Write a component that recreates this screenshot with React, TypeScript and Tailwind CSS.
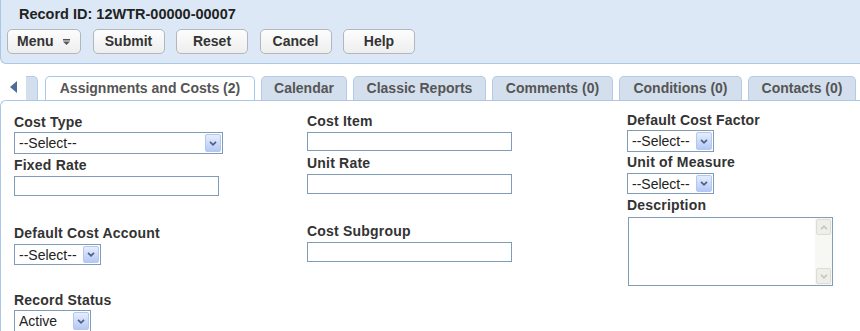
import React from "react";

function Chevron() {
  return (
    <svg width="8" height="5" viewBox="0 0 8 5">
      <path d="M1 0.8l3 3 3-3" stroke="#4d6185" strokeWidth="1.7" fill="none" />
    </svg>
  );
}

function FakeSelect({ value, className }: { value: string; className: string }) {
  return (
    <div className={`flex border border-[#7f9db9] bg-white pl-[4px] pr-[1px] ${className}`}>
      <span className="flex flex-1 items-center text-[14px] leading-4 text-[#222]">{value}</span>
      <span className="my-[1px] flex w-[16px] items-center justify-center rounded-[2px] border border-[#b4c7ef] bg-gradient-to-b from-[#e6edfd] to-[#b5c9f5]">
        <Chevron />
      </span>
    </div>
  );
}

function Label({ text, className = "" }: { text: string; className?: string }) {
  return (
    <div className={`h-4 text-[14px] leading-4 font-bold tracking-[0.2px] text-[#333] whitespace-nowrap ${className}`}>
      {text}
    </div>
  );
}

function Btn({ children, className = "" }: { children: React.ReactNode; className?: string }) {
  return (
    <div
      className={`flex h-[25px] items-center justify-center rounded-[5px] border border-[#b0b7bf] bg-gradient-to-b from-[#fdfdfd] to-[#eeeeee] text-[14px] font-bold text-[#333] ${className}`}
    >
      {children}
    </div>
  );
}

export default function App() {
  const tabs = [
    { label: "Calendar", w: "w-[86px]" },
    { label: "Classic Reports", w: "w-[133px]" },
    { label: "Comments (0)", w: "w-[121px]" },
    { label: "Conditions (0)", w: "w-[123px]" },
    { label: "Contacts (0)", w: "w-[108px]" },
  ];

  return (
    <div className="flex h-[331px] w-[860px] flex-col overflow-hidden bg-white font-['Liberation_Sans',Arial,sans-serif]">
      {/* Header */}
      <div className="h-[64px] shrink-0 rounded-bl-[6px] border-b border-l border-[#a9c8e8] bg-[#dce8f5]">
        <div className="pt-[6px] pl-[18px] text-[14.5px] leading-4 font-bold text-[#222]">
          Record ID: 12WTR-00000-00007
        </div>
        <div className="mt-[7px] flex gap-[11.5px] pl-[6px]">
          <Btn className="w-[74px] justify-start gap-[9px] pl-[9px]">
            <span>Menu</span>
            <svg width="7" height="6" viewBox="0 0 7 6">
              <rect x="0" y="0" width="7" height="1.5" fill="#555" />
              <path d="M0 2.5H7L3.5 6Z" fill="#555" />
            </svg>
          </Btn>
          <Btn className="w-[72px]">Submit</Btn>
          <Btn className="w-[72px]">Reset</Btn>
          <Btn className="w-[72px]">Cancel</Btn>
          <Btn className="w-[72px]">Help</Btn>
        </div>
      </div>

      {/* Tabs */}
      <div className="mt-[12px] flex h-[24px] shrink-0 items-end pl-[10px]">
        <svg width="7" height="12" viewBox="0 0 7 12" className="mb-[7px]">
          <path d="M7 0V12L0 6Z" fill="#4f6d94" />
        </svg>
        <div className="ml-[9px] h-[24px] w-[12px] rounded-tr-[5px] border-t border-r border-[#b2cbe6] bg-[#d3dfed]" />
        <div className="ml-[7px] flex gap-[6px]">
          <div className="flex h-[24px] w-[210px] items-center justify-center rounded-t-[5px] border border-b-0 border-[#a9c8e8] bg-white text-[14px] font-bold text-[#555]">
            Assignments and Costs (2)
          </div>
          {tabs.map((t) => (
            <div
              key={t.label}
              className={`flex h-[24px] items-center justify-center rounded-t-[5px] border border-b-0 border-[#b2cbe6] bg-[#d3dfed] text-[14px] font-bold whitespace-nowrap text-[#555] ${t.w}`}
            >
              {t.label}
            </div>
          ))}
        </div>
      </div>

      {/* Content */}
      <div className="flex-1 rounded-tl-[6px] border-t border-l border-[#a9c8e8]">
        <div className="grid grid-cols-[293px_320px_1fr] pl-[13px]">
          {/* Column 1 */}
          <div className="mt-[13px] flex flex-col items-start">
            <Label text="Cost Type" />
            <FakeSelect value="--Select--" className="mt-[2px] h-[22px] w-[209px]" />
            <Label text="Fixed Rate" className="mt-[3px]" />
            <div className="mt-[3px] h-[20px] w-[205px] border border-[#7f9db9] bg-white" />
            <Label text="Default Cost Account" className="mt-[29px]" />
            <FakeSelect value="--Select--" className="mt-[3px] h-[21px] w-[87px]" />
            <Label text="Record Status" className="mt-[27px]" />
            <FakeSelect value="Active" className="mt-[2px] h-[22px] w-[77px]" />
          </div>

          {/* Column 2 */}
          <div className="mt-[12px] flex flex-col items-start">
            <Label text="Cost Item" />
            <div className="mt-[3px] h-[19px] w-[205px] border border-[#7f9db9] bg-white" />
            <Label text="Unit Rate" className="mt-[4px]" />
            <div className="mt-[3px] h-[20px] w-[205px] border border-[#7f9db9] bg-white" />
            <Label text="Cost Subgroup" className="mt-[29px]" />
            <div className="mt-[3px] h-[20px] w-[205px] border border-[#7f9db9] bg-white" />
          </div>

          {/* Column 3 */}
          <div className="mt-[11px] flex flex-col items-start">
            <Label text="Default Cost Factor" />
            <FakeSelect value="--Select--" className="mt-[2px] h-[22px] w-[87px]" />
            <Label text="Unit of Measure" className="mt-[2px]" />
            <FakeSelect value="--Select--" className="mt-[3px] h-[21px] w-[87px]" />
            <Label text="Description" className="mt-[3px]" />
            <div className="mt-[4px] ml-[1px] flex h-[69px] w-[205px] justify-end border border-[#7f9db9] bg-white">
              <div className="flex w-[17px] flex-col justify-between bg-[#f7f7f3] p-[1px]">
                <div className="flex h-[16px] items-center justify-center rounded-[2px] border border-[#dcdcd5] bg-[#efefea]">
                  <svg width="8" height="5" viewBox="0 0 8 5">
                    <path d="M1 4.2l3-3 3 3" stroke="#c4c4c0" strokeWidth="1.6" fill="none" />
                  </svg>
                </div>
                <div className="flex h-[16px] items-center justify-center rounded-[2px] border border-[#dcdcd5] bg-[#efefea]">
                  <svg width="8" height="5" viewBox="0 0 8 5">
                    <path d="M1 0.8l3 3 3-3" stroke="#c4c4c0" strokeWidth="1.6" fill="none" />
                  </svg>
                </div>
              </div>
            </div>
          </div>
        </div>
      </div>
    </div>
  );
}
